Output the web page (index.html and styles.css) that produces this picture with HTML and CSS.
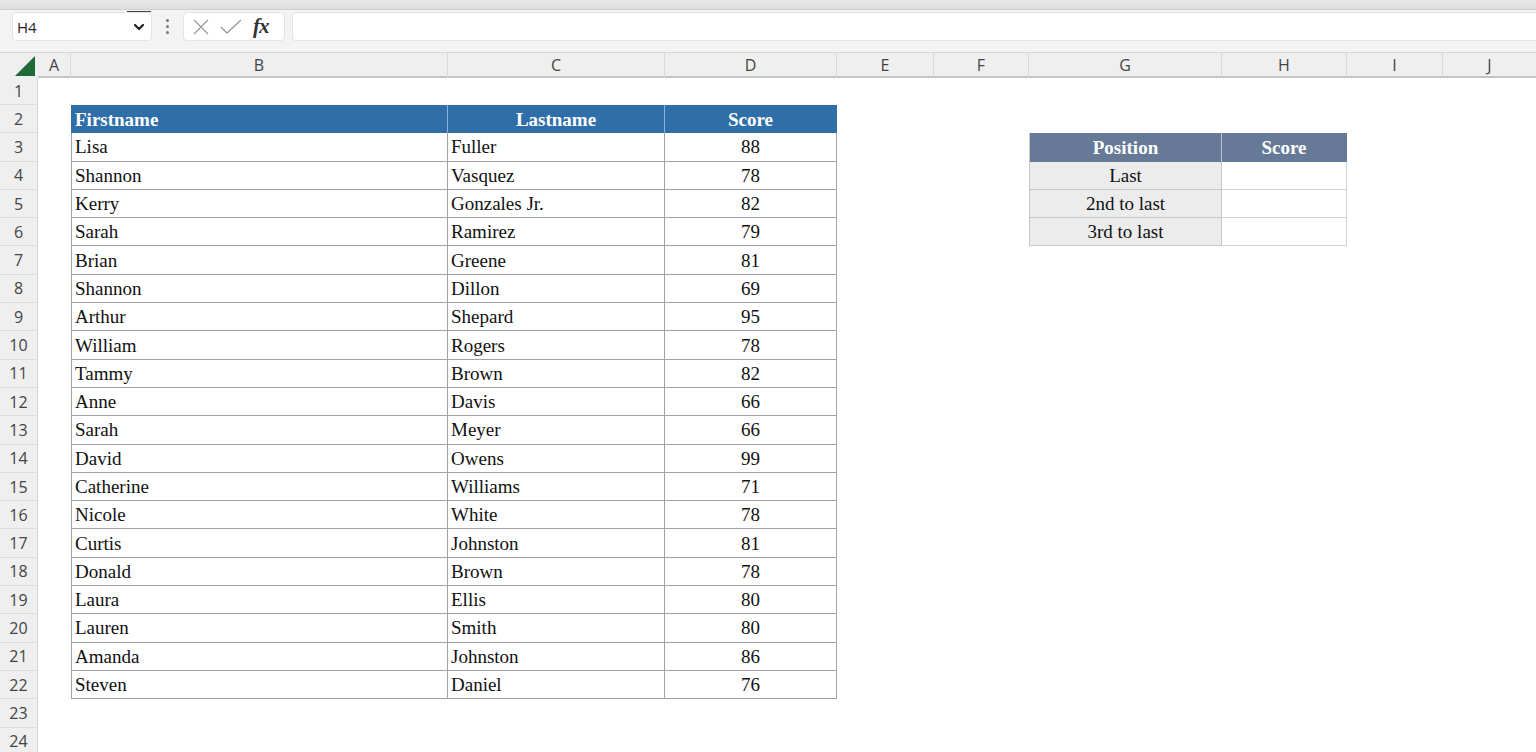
FILE: index.html
```html
<!DOCTYPE html>
<html lang="en">
<head>
  <meta charset="UTF-8" />
  <title>Scores</title>
  <link rel="stylesheet" href="styles.css">
</head>
<body>

  <div class="topstrip"></div>

  <div class="formula-bar">
    <div class="namebox">
      <span class="cell-ref">H4</span>
      <svg class="chevron" width="12" height="8" viewBox="0 0 12 8"><polyline points="2,2 6,6 10,2" fill="none" stroke="#222" stroke-width="2.2" stroke-linecap="round" stroke-linejoin="round"/></svg>
    </div>
    <div class="grip">
      <span></span><span></span><span></span>
    </div>
    <div class="fx-buttons">
      <svg width="20" height="20" viewBox="0 0 20 20"><path d="M3 3 L17 17 M17 3 L3 17" stroke="#9a9a9a" stroke-width="1.3" fill="none"/></svg>
      <svg width="24" height="20" viewBox="0 0 24 20"><polyline points="2,10 8,16 22,3" stroke="#9a9a9a" stroke-width="1.3" fill="none"/></svg>
      <span class="fx">fx</span>
    </div>
    <div class="formula-input"></div>
  </div>

  <div class="sheet">
    <!-- column headers -->
    <div class="row colhead">
      <div class="corner"><span class="tri"></span></div>
      <div class="ch-cell">A</div>
      <div class="ch-cell">B</div>
      <div class="ch-cell">C</div>
      <div class="ch-cell">D</div>
      <div class="ch-cell">E</div>
      <div class="ch-cell">F</div>
      <div class="ch-cell">G</div>
      <div class="ch-cell">H</div>
      <div class="ch-cell">I</div>
      <div class="ch-cell last">J</div>
    </div>

    <div class="row first"><div class="rh">1</div></div>

    <div class="row">
      <div class="rh">2</div>
      <div class="c-b th left">Firstname</div>
      <div class="c-c th">Lastname</div>
      <div class="c-d th end">Score</div>
    </div>

    <div class="row">
      <div class="rh">3</div>
      <div class="c-b td">Lisa</div><div class="c-c td">Fuller</div><div class="c-d td num">88</div>
      <div class="c-g sh">Position</div><div class="c-h sh end">Score</div>
    </div>
    <div class="row">
      <div class="rh">4</div>
      <div class="c-b td">Shannon</div><div class="c-c td">Vasquez</div><div class="c-d td num">78</div>
      <div class="c-g sd">Last</div><div class="c-h sv"></div>
    </div>
    <div class="row">
      <div class="rh">5</div>
      <div class="c-b td">Kerry</div><div class="c-c td">Gonzales Jr.</div><div class="c-d td num">82</div>
      <div class="c-g sd">2nd to last</div><div class="c-h sv"></div>
    </div>
    <div class="row">
      <div class="rh">6</div>
      <div class="c-b td">Sarah</div><div class="c-c td">Ramirez</div><div class="c-d td num">79</div>
      <div class="c-g sd">3rd to last</div><div class="c-h sv"></div>
    </div>
    <div class="row"><div class="rh">7</div><div class="c-b td">Brian</div><div class="c-c td">Greene</div><div class="c-d td num">81</div></div>
    <div class="row"><div class="rh">8</div><div class="c-b td">Shannon</div><div class="c-c td">Dillon</div><div class="c-d td num">69</div></div>
    <div class="row"><div class="rh">9</div><div class="c-b td">Arthur</div><div class="c-c td">Shepard</div><div class="c-d td num">95</div></div>
    <div class="row"><div class="rh">10</div><div class="c-b td">William</div><div class="c-c td">Rogers</div><div class="c-d td num">78</div></div>
    <div class="row"><div class="rh">11</div><div class="c-b td">Tammy</div><div class="c-c td">Brown</div><div class="c-d td num">82</div></div>
    <div class="row"><div class="rh">12</div><div class="c-b td">Anne</div><div class="c-c td">Davis</div><div class="c-d td num">66</div></div>
    <div class="row"><div class="rh">13</div><div class="c-b td">Sarah</div><div class="c-c td">Meyer</div><div class="c-d td num">66</div></div>
    <div class="row"><div class="rh">14</div><div class="c-b td">David</div><div class="c-c td">Owens</div><div class="c-d td num">99</div></div>
    <div class="row"><div class="rh">15</div><div class="c-b td">Catherine</div><div class="c-c td">Williams</div><div class="c-d td num">71</div></div>
    <div class="row"><div class="rh">16</div><div class="c-b td">Nicole</div><div class="c-c td">White</div><div class="c-d td num">78</div></div>
    <div class="row"><div class="rh">17</div><div class="c-b td">Curtis</div><div class="c-c td">Johnston</div><div class="c-d td num">81</div></div>
    <div class="row"><div class="rh">18</div><div class="c-b td">Donald</div><div class="c-c td">Brown</div><div class="c-d td num">78</div></div>
    <div class="row"><div class="rh">19</div><div class="c-b td">Laura</div><div class="c-c td">Ellis</div><div class="c-d td num">80</div></div>
    <div class="row"><div class="rh">20</div><div class="c-b td">Lauren</div><div class="c-c td">Smith</div><div class="c-d td num">80</div></div>
    <div class="row"><div class="rh">21</div><div class="c-b td">Amanda</div><div class="c-c td">Johnston</div><div class="c-d td num">86</div></div>
    <div class="row"><div class="rh">22</div><div class="c-b td">Steven</div><div class="c-c td">Daniel</div><div class="c-d td num">76</div></div>

    <div class="row"><div class="rh">23</div></div>
    <div class="row"><div class="rh">24</div></div>
  </div>

</body>
</html>
```

FILE: styles.css
```css
* {
  margin: 0;
  padding: 0;
  box-sizing: border-box;
}

body {
  background: #ffffff;
  font-family: "Open Sans", "Noto Sans", sans-serif;
  height: 100vh;
  overflow: hidden;
  color: #222;
}

/* ---- top toolbar ---- */

.topstrip {
  height: 10px;
  background: linear-gradient(to bottom, #e9e9e9, #dedede);
  border-bottom: 1px solid #cfcfcf;
}

.formula-bar {
  height: 42px;
  background: #f3f3f3;
  display: flex;
  align-items: flex-start;
  padding: 2px 0 0 12px;
}

.namebox {
  width: 140px;
  height: 29px;
  background: #fff;
  border: 1px solid #e3e3e3;
  border-radius: 4px;
  display: flex;
  align-items: center;
  justify-content: space-between;
  padding: 0 6px 0 4px;
  position: relative;
}

.namebox::after {
  content: "";
  position: absolute;
  top: -2px;
  right: 0;
  width: 24px;
  height: 1px;
  background: #444;
}

.cell-ref {
  font-size: 15px;
  color: #222;
}

.grip {
  width: 31px;
  height: 29px;
  display: flex;
  flex-direction: column;
  align-items: center;
  justify-content: center;
  gap: 3px;
}

.grip span {
  width: 3px;
  height: 3px;
  border-radius: 50%;
  background: #777;
}

.fx-buttons {
  width: 102px;
  height: 29px;
  background: #fff;
  border: 1px solid #e3e3e3;
  border-radius: 4px;
  display: flex;
  align-items: center;
  gap: 8px;
  padding-left: 7px;
}

.fx {
  font-family: "Liberation Serif", serif;
  font-style: italic;
  font-weight: 700;
  font-size: 21px;
  color: #333;
  margin-left: 2px;
  letter-spacing: -1px;
}

.formula-input {
  flex: 1;
  height: 29px;
  margin-left: 7px;
  background: #fff;
  border: 1px solid #e3e3e3;
  border-right: none;
  border-radius: 4px 0 0 4px;
}

/* ---- sheet grid ---- */

.sheet {
  --cols: 38px 33px 377px 217px 172px 97px 95px 193px 125px 96px 1fr;
}

.row {
  display: grid;
  grid-template-columns: var(--cols);
  height: 28.3px;
}

.row.colhead {
  height: 26px;
  background: #efefef;
  border-top: 1px solid #d6d6d6;
  border-bottom: 2px solid #c4c4c4;
}

.row.first {
  height: 27px;
}

.corner {
  position: relative;
  background: #efefef;
}

.tri {
  position: absolute;
  right: 3px;
  bottom: 2px;
  width: 0;
  height: 0;
  border-left: 20px solid transparent;
  border-bottom: 20px solid #1d6b38;
}

.ch-cell {
  font-size: 16px;
  color: #444;
  text-align: center;
  line-height: 25px;
  border-right: 1px solid #dadada;
}

.ch-cell.last {
  border-right: none;
}

.rh {
  grid-column: 1;
  background: #efefef;
  border-bottom: 1px solid #dedede;
  border-right: 1px solid #d3d3d3;
  font-size: 16px;
  color: #444;
  text-align: center;
  display: flex;
  align-items: center;
  justify-content: center;
}

.c-b { grid-column: 3; }
.c-c { grid-column: 4; }
.c-d { grid-column: 5; }
.c-g { grid-column: 8; }
.c-h { grid-column: 9; }

/* main table */

.th,
.td,
.sh,
.sd,
.sv {
  font-family: "Liberation Serif", "Times New Roman", serif;
  font-size: 19px;
  display: flex;
  align-items: center;
  white-space: nowrap;
  padding-top: 1px;
}

.th {
  background: #2f6ea8;
  color: #fff;
  font-weight: 700;
  justify-content: center;
  border-right: 1px solid #8fb0d2;
}

.th.left {
  justify-content: flex-start;
  padding-left: 4px;
}

.th.end {
  border-right: 1px solid #2f6ea8;
}

.td {
  color: #111;
  padding-left: 3px;
  border-right: 1px solid #a3a3a3;
  border-bottom: 1px solid #a3a3a3;
}

.c-b.td {
  border-left: 1px solid #a3a3a3;
}

.td.num {
  justify-content: center;
  padding-left: 0;
}

/* lookup table */

.sh {
  background: #667a98;
  color: #fff;
  font-weight: 700;
  justify-content: center;
  border-left: 1px solid #c9c9c9;
  border-right: 1px solid #b9c3d2;
}

.sh.end {
  border-left: none;
  border-right: 1px solid #667a98;
}

.sd {
  background: #ececec;
  color: #111;
  justify-content: center;
  border-left: 1px solid #c6c6c6;
  border-right: 1px solid #c6c6c6;
  border-bottom: 1px solid #c6c6c6;
}

.sv {
  background: #fff;
  border-right: 1px solid #d3d3d3;
  border-bottom: 1px solid #d3d3d3;
}
```
